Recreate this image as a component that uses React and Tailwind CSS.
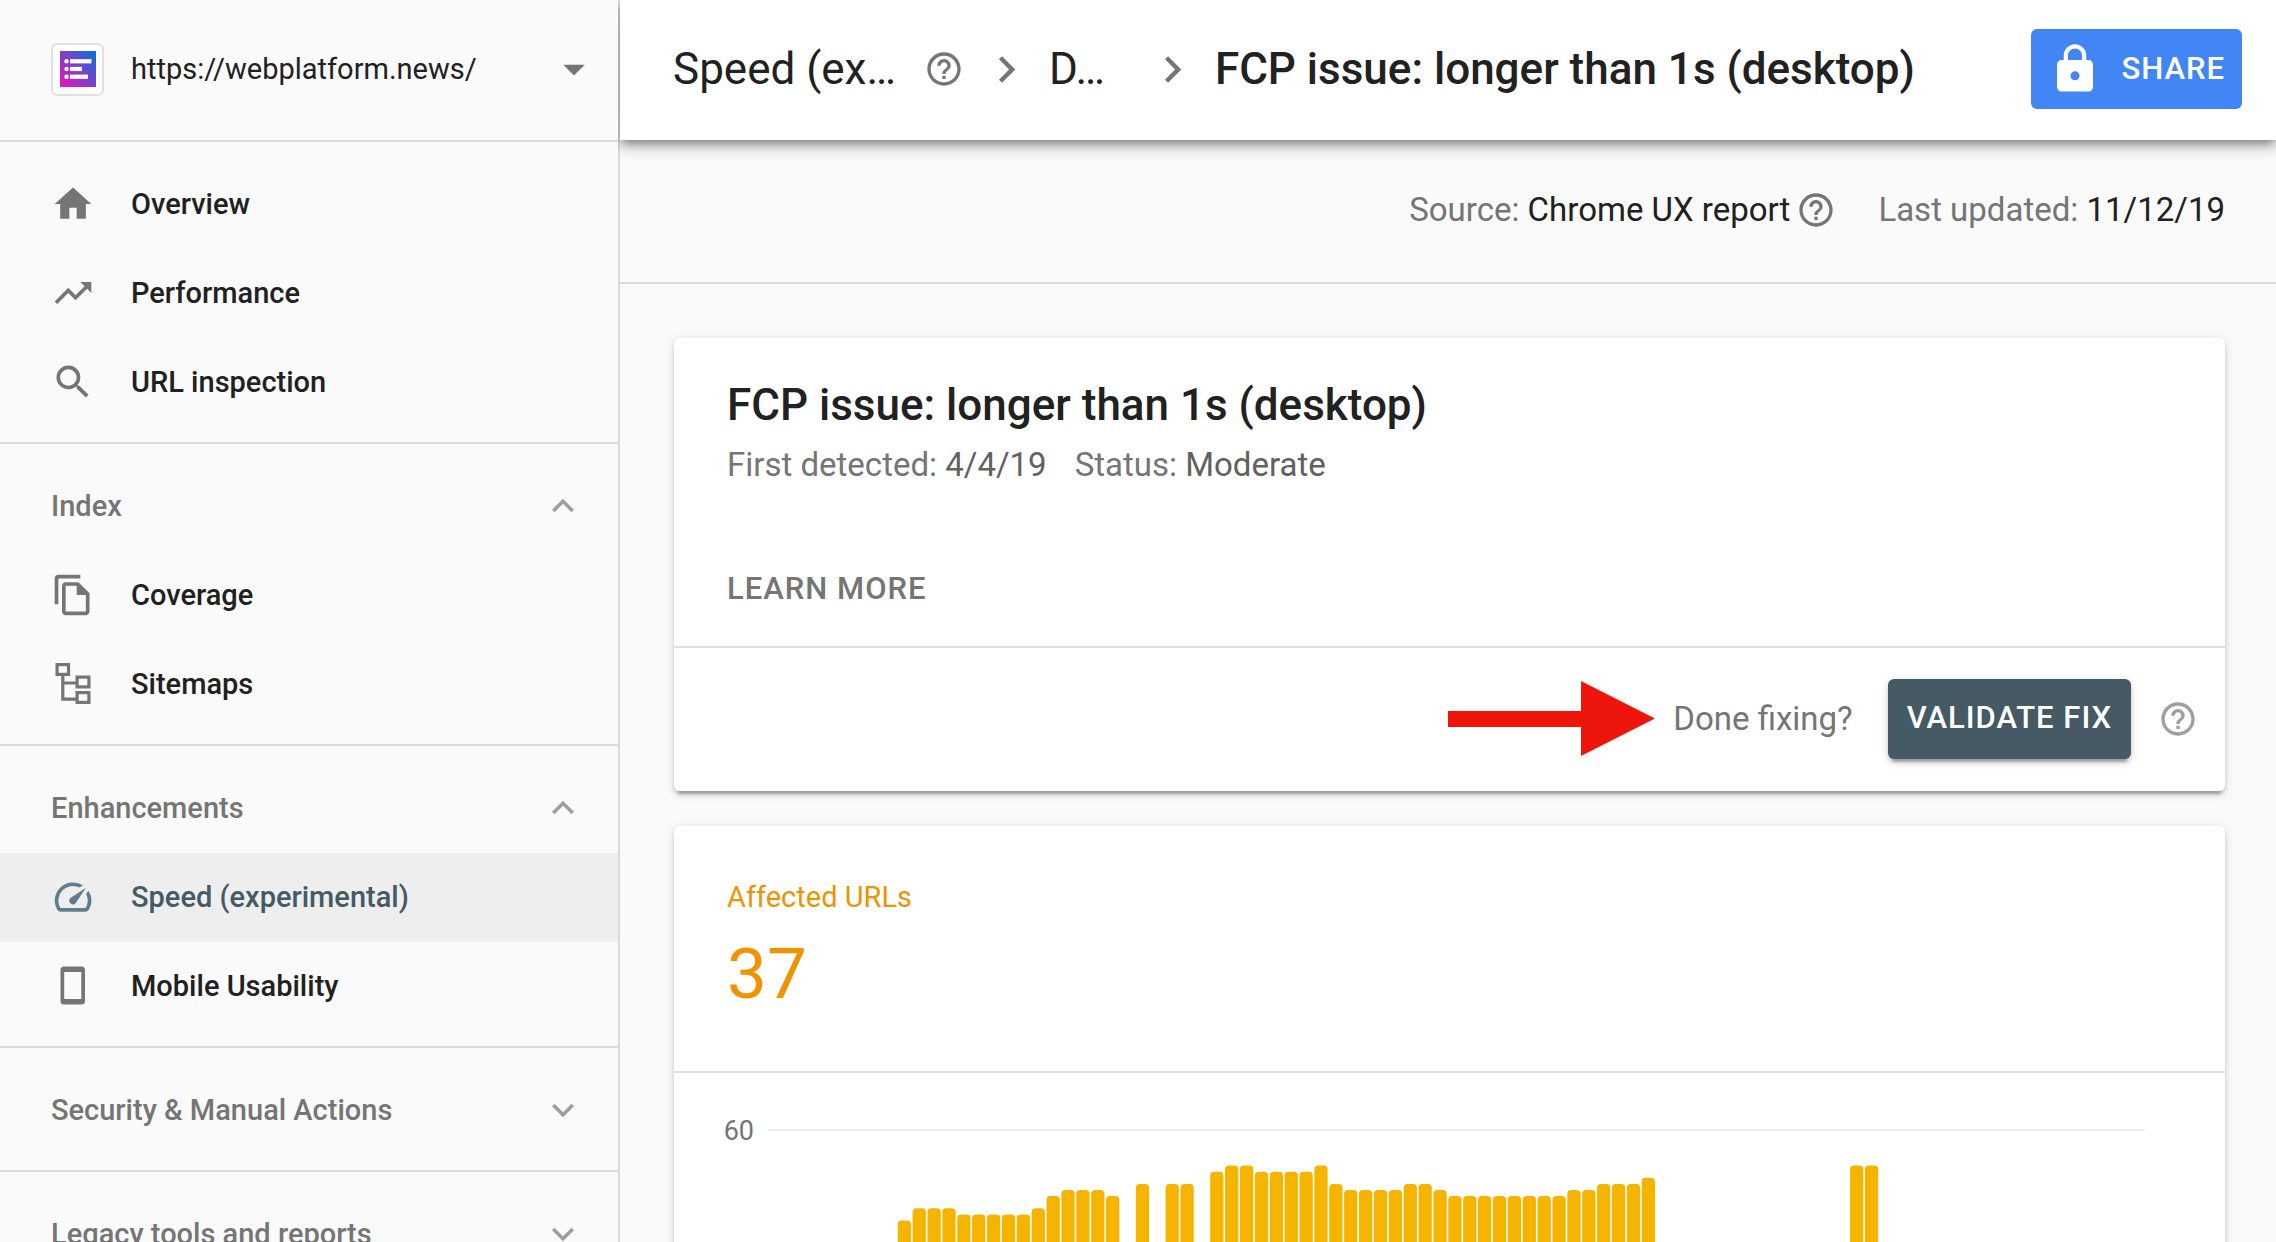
import {
  MdArrowDropDown,
  MdChevronRight,
  MdExpandLess,
  MdExpandMore,
  MdHelpOutline,
  MdLock,
  MdSearch,
  MdSpeed,
  MdTrendingUp,
} from "react-icons/md";

function HomeIcon({ className }) {
  return (
    <svg viewBox="0 0 24 24" fill="currentColor" className={className} aria-hidden="true">
      <path d="M10 20v-6h4v6h5v-8h3L12 3 2 12h3v8z" />
    </svg>
  );
}

function CoverageIcon({ className }) {
  return (
    <svg viewBox="0 0 24 24" fill="currentColor" className={className} aria-hidden="true">
      <path d="M16 1H4c-1.1 0-2 .9-2 2v14h2V3h12V1zm-1 4H8c-1.1 0-1.99.9-1.99 2L6 21c0 1.1.89 2 1.99 2H19c1.1 0 2-.9 2-2V11l-6-6zM8 21V7h6v5h5v9H8z" />
    </svg>
  );
}

function SitemapIcon({ className }) {
  return (
    <svg viewBox="0 0 44 44" fill="none" stroke="currentColor" strokeWidth="3.2" className={className} aria-hidden="true">
      <rect x="6.1" y="2.6" width="11.4" height="9.8" />
      <rect x="26.1" y="15.1" width="11.8" height="9.8" />
      <rect x="26.1" y="30.6" width="11.8" height="9.8" />
      <path d="M11.8 13v24.2h14M11.8 21h14" />
    </svg>
  );
}

function PhoneIcon({ className }) {
  return (
    <svg viewBox="0 0 44 44" fill="currentColor" className={className} aria-hidden="true">
      <path
        fillRule="evenodd"
        d="M13 2.5h17.5a3.5 3.5 0 0 1 3.5 3.5v31a3.5 3.5 0 0 1-3.5 3.5H13A3.5 3.5 0 0 1 9.5 37V6A3.5 3.5 0 0 1 13 2.5zM13.2 8v27h17.1V8z"
      />
    </svg>
  );
}

function SiteLogo() {
  return (
    <span className="flex size-[53px] shrink-0 items-center justify-center rounded-md border-2 border-black/12 bg-white">
      <svg viewBox="0 0 36 36" className="size-9" aria-hidden="true">
        <defs>
          <linearGradient id="logo" x1="0" y1="1" x2="1" y2="0">
            <stop offset="0" stopColor="#f012be" />
            <stop offset="0.5" stopColor="#7b40cc" />
            <stop offset="1" stopColor="#0074d9" />
          </linearGradient>
        </defs>
        <rect width="36" height="36" fill="url(#logo)" />
        <g fill="#fff">
          <circle cx="6.5" cy="10.3" r="2.2" />
          <circle cx="6.5" cy="18" r="2.2" />
          <circle cx="6.5" cy="25.7" r="2.2" />
          <rect x="10" y="8.2" width="21.5" height="4.2" />
          <rect x="10" y="15.9" width="12" height="4.2" />
          <rect x="10" y="23.6" width="18" height="4.2" />
        </g>
      </svg>
    </span>
  );
}

function NavItem({ icon: Icon, label, active }) {
  return (
    <li>
      <a
        href="#"
        aria-current={active ? "page" : undefined}
        className={
          active
            ? "flex h-[89px] items-center gap-9 bg-[#eeeeee] pb-0.5 pl-[51px] text-[#455a64]"
            : "flex h-[89px] items-center gap-9 pb-0.5 pl-[51px]"
        }
      >
        <Icon className={active ? "size-11 shrink-0 text-[#607d8b]" : "size-11 shrink-0 text-[#757575]"} />
        {label}
      </a>
    </li>
  );
}

function NavSection({ title, open, items = [] }) {
  const Chevron = open ? MdExpandLess : MdExpandMore;
  return (
    <section className="border-b-2 border-black/12 pt-[18px] pb-[15px]">
      {title && (
        <button
          type="button"
          aria-expanded={!!open}
          className="flex h-[89px] w-full items-center justify-between pr-[33px] pb-0.5 pl-[51px] text-[#757575]"
        >
          {title}
          <Chevron className="size-11 text-[#9e9e9e]" />
        </button>
      )}
      {items.length > 0 && (
        <ul>
          {items.map((item) => (
            <NavItem key={item.label} {...item} />
          ))}
        </ul>
      )}
    </section>
  );
}

const SECTIONS = [
  {
    items: [
      { icon: HomeIcon, label: "Overview" },
      { icon: MdTrendingUp, label: "Performance" },
      { icon: MdSearch, label: "URL inspection" },
    ],
  },
  {
    title: "Index",
    open: true,
    items: [
      { icon: CoverageIcon, label: "Coverage" },
      { icon: SitemapIcon, label: "Sitemaps" },
    ],
  },
  {
    title: "Enhancements",
    open: true,
    items: [
      { icon: MdSpeed, label: "Speed (experimental)", active: true },
      { icon: PhoneIcon, label: "Mobile Usability" },
    ],
  },
  { title: "Security & Manual Actions" },
  { title: "Legacy tools and reports" },
];

function Sidebar() {
  return (
    <aside className="z-20 w-[620px] shrink-0 border-r-2 border-black/12 bg-[#fafafa] bg-clip-padding text-[29px] leading-10">
      <div className="flex h-[142px] items-center gap-[27px] border-b-2 border-black/12 pr-[18px] pb-0.5 pl-[51px]">
        <SiteLogo />
        <select aria-label="Property" className="min-w-0 flex-1 appearance-none bg-transparent">
          <option>https://webplatform.news/</option>
        </select>
        <MdArrowDropDown className="pointer-events-none size-[52px] text-[#757575]" />
      </div>
      <nav className="font-medium">
        {SECTIONS.map((section, i) => (
          <NavSection key={i} {...section} />
        ))}
      </nav>
    </aside>
  );
}

function HelpButton({ className }) {
  return (
    <button type="button" aria-label="Help" className={className}>
      <MdHelpOutline className="size-10" />
    </button>
  );
}

function Header() {
  return (
    <header className="z-10 flex h-[140px] shrink-0 items-center justify-between bg-white pr-[34px] pb-0.5 pl-[53px] shadow-[0_9px_11px_rgba(0,0,0,0.14),0_2px_22px_rgba(0,0,0,0.12),0_4px_9px_-2px_rgba(0,0,0,0.4)]">
      <div className="flex items-center gap-4 text-[44px] leading-[60px]">
        <a href="#">Speed (ex…</a>
        <HelpButton className="ml-3 text-[#757575]" />
        <MdChevronRight className="size-[53px] text-[#757575]" />
        <a href="#" className="w-[81px]">
          D…
        </a>
        <MdChevronRight className="size-[53px] text-[#757575]" />
        <h1 className="font-medium">FCP issue: longer than 1s (desktop)</h1>
      </div>
      <button
        type="button"
        className="flex h-20 items-center gap-[19px] rounded-md bg-[#4285f4] px-[17px] text-[31px] font-medium tracking-[1px] text-white"
      >
        <MdLock className="size-[54px]" />
        SHARE
      </button>
    </header>
  );
}

const CARD =
  "rounded-md bg-white shadow-[0_4px_4px_rgba(0,0,0,0.14),0_2px_11px_rgba(0,0,0,0.12),0_7px_2px_-4px_rgba(0,0,0,0.2)]";

function IssueCard() {
  return (
    <section className={CARD}>
      <div className="border-b-2 border-black/12 px-[53px] pt-[37px] pb-[17px]">
        <h2 className="text-[44px] leading-[60px] font-medium">FCP issue: longer than 1s (desktop)</h2>
        <p className="mt-2 flex gap-7 text-[33px] leading-[44px] text-[#757575]">
          <span>
            First detected: <span className="text-[#616161]">4/4/19</span>
          </span>
          <span>
            Status: <span className="text-[#616161]">Moderate</span>
          </span>
        </p>
        <a
          href="#"
          className="mt-[62px] inline-flex h-20 items-center align-top text-[31px] font-medium tracking-[1px] text-[#757575]"
        >
          LEARN MORE
        </a>
      </div>
      <div className="flex h-[143px] items-center justify-end pr-[27px] pb-0.5">
        <svg viewBox="0 0 207 75" className="mr-[18px] h-[75px] w-[207px]" aria-hidden="true">
          <path d="M0 30h133V0l74 37.5L133 75V46H0z" fill="#ee150c" />
        </svg>
        <span className="mr-[35px] text-[33px] leading-[44px] text-[#757575]">Done fixing?</span>
        <button
          type="button"
          className="mr-[27px] h-20 rounded-md bg-[#455a64] px-[19px] text-[31px] font-medium tracking-[1px] text-white shadow-[0_4px_4px_rgba(0,0,0,0.14),0_2px_11px_rgba(0,0,0,0.12),0_7px_2px_-4px_rgba(0,0,0,0.2)]"
        >
          VALIDATE FIX
        </button>
        <HelpButton className="text-[#9e9e9e]" />
      </div>
    </section>
  );
}

// Affected URL count per day; null marks a day without data.
const DAYS = [
  45, 47, 47, 47, 46, 46, 46, 46, 46, 47, 49, 50, 50, 50, 49, null, 51, null, 51, 51, null,
  53, 54, 54, 53, 53, 53, 53, 54, 51, 50, 50, 50, 50, 51, 51, 50, 49, 49, 49, 49, 49, 49, 49, 49,
  50, 50, 51, 51, 51, 52, null, null, null, null, null, null, null, null, null, null, null, null, null,
  54, 54,
];
const TICKS = [60, 40, 20, 0];
const yOf = (value) => 20 + (60 - value) * 6.1;

function Chart() {
  return (
    <svg viewBox="0 0 1424 400" className="h-auto w-full" role="img" aria-label="Affected URLs per day">
      {TICKS.map((tick) => (
        <g key={tick}>
          <text x="33" y={yOf(tick) + 9.5} textAnchor="end" fontSize="27" fill="#757575">
            {tick}
          </text>
          <rect x="46.5" y={yOf(tick) - 1} width="1377.5" height="2" fill="#eeeeee" />
        </g>
      ))}
      {DAYS.map((value, i) =>
        value === null ? null : (
          <path
            key={i}
            fill="#f5b400"
            d={`M${176.7 + i * 14.88} ${yOf(0)}V${yOf(value) + 3}q0-4 4-4h5.3q4 0 4 4V${yOf(0)}z`}
          />
        )
      )}
    </svg>
  );
}

function AffectedCard() {
  return (
    <section className={CARD}>
      <div className="border-b-2 border-black/12 px-[53px] pt-[51px] pb-[57px] text-[#f09300]">
        <h3 className="text-[29px] leading-10">Affected URLs</h3>
        <p className="mt-[17px] text-[71px] leading-[80px]">37</p>
      </div>
      <div className="pt-[37px] pr-20 pb-20 pl-[47px]">
        <Chart />
      </div>
    </section>
  );
}

export default function App() {
  return (
    <div className="flex h-screen overflow-hidden bg-[#fafafa] font-[Roboto,sans-serif] text-[#212121]">
      <Sidebar />
      <div className="flex min-w-0 flex-1 flex-col">
        <Header />
        <main className="min-h-0 flex-1 overflow-hidden">
          <div className="flex h-36 items-center justify-end gap-[42px] border-b-2 border-black/12 pr-[51px] pb-0.5 text-[33px] leading-[44px]">
            <div className="flex items-center gap-1.5">
              <span>
                <span className="text-[#757575]">Source:</span> Chrome UX report
              </span>
              <HelpButton className="text-[#757575]" />
            </div>
            <span>
              <span className="text-[#757575]">Last updated:</span> 11/12/19
            </span>
          </div>
          <div className="flex flex-col gap-[35px] pt-[54px] pr-[51px] pl-[54px]">
            <IssueCard />
            <AffectedCard />
          </div>
        </main>
      </div>
    </div>
  );
}
